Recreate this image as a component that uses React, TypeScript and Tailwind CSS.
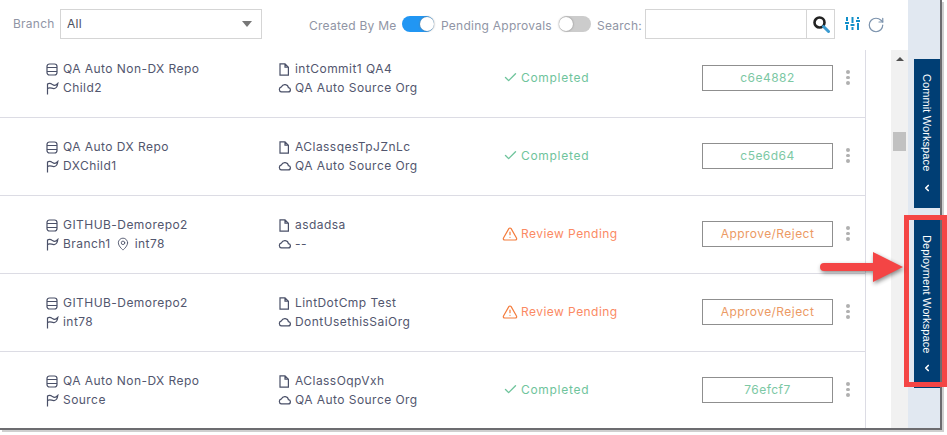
import { Check, ChevronLeft, MapPin, RotateCw, TriangleAlert } from 'lucide-react';

const rows = [
  { repo: 'QA Auto Non-DX Repo', branch: 'Child2', commit: 'intCommit1 QA4', org: 'QA Auto Source Org', done: true, action: 'c6e4882' },
  { repo: 'QA Auto DX Repo', branch: 'DXChild1', commit: 'AClassqesTpJZnLc', org: 'QA Auto Source Org', done: true, action: 'c5e6d64' },
  { repo: 'GITHUB-Demorepo2', branch: 'Branch1', pin: 'int78', commit: 'asdadsa', org: '--', done: false, action: 'Approve/Reject' },
  { repo: 'GITHUB-Demorepo2', branch: 'int78', commit: 'LintDotCmp Test', org: 'DontUsethisSaiOrg', done: false, action: 'Approve/Reject' },
  { repo: 'QA Auto Non-DX Repo', branch: 'Source', commit: 'AClassOqpVxh', org: 'QA Auto Source Org', done: true, action: '76efcf7' },
];

const iconStroke = { fill: 'none', stroke: '#4a5068', strokeWidth: 1.2 };

function FlagIcon() {
  return (
    <svg width="13" height="13" viewBox="0 0 13 13" {...iconStroke} className="shrink-0">
      <path d="M1.5 12.5V2C3.5.6 5 1.4 6.5 2.6 8 3.7 10 3.6 11.8 1.5 11.5 4 10.5 6.3 8 6.6 5.8 6.8 4 4.6 1.5 6.6" />
    </svg>
  );
}

function DbIcon() {
  return (
    <svg width="12" height="13" viewBox="0 0 12 13" {...iconStroke} className="shrink-0">
      <rect x="1" y="1" width="10" height="11" rx="2.5" />
      <path d="M1 4.5h10M1 8.5h10" />
    </svg>
  );
}

function FileIcon() {
  return (
    <svg width="12" height="13" viewBox="0 0 12 13" {...iconStroke} className="shrink-0">
      <path d="M2 .8h5l3.4 3.4v8H2zM7 .8v3.4h3.4" />
    </svg>
  );
}

function CloudIcon() {
  return (
    <svg width="13" height="10" viewBox="0 0 13 10" {...iconStroke} className="shrink-0">
      <path d="M3.4 8.9H10.2A2.1 2.1 0 0 0 10.4 4.7 3.6 3.6 0 0 0 3.5 3.8 2.6 2.6 0 0 0 3.4 8.9z" />
    </svg>
  );
}

function Toggle({ on }: { on: boolean }) {
  return (
    <span className={`flex h-4 w-8 items-center rounded-full ${on ? 'justify-end bg-[#2196f3]' : 'justify-start bg-[#cccccc]'}`}>
      <span className="size-[14px] rounded-full bg-white shadow-[0_0_2px_#777]" />
    </span>
  );
}

function IconLine({ icon, children }: { icon: React.ReactNode; children: React.ReactNode }) {
  return (
    <div className="flex h-[19px] items-center">
      <span className="-ml-px flex w-[17px] shrink-0 items-center">{icon}</span>
      {children}
    </div>
  );
}

function Row({ row }: { row: (typeof rows)[number] }) {
  return (
    <div className="flex h-[78px] shrink-0 items-center border-b border-[#dcdce4] pl-[47px] text-[#52566e]">
      <div className="w-[232px]">
        <IconLine icon={<DbIcon />}>{row.repo}</IconLine>
        <IconLine icon={<FlagIcon />}>
          {row.branch}
          {row.pin && (
            <>
              <MapPin size={14} color="#4a5068" strokeWidth={1.5} className="mx-[5px]" />
              {row.pin}
            </>
          )}
        </IconLine>
      </div>
      <div className="w-[224px]">
        <IconLine icon={<FileIcon />}>{row.commit}</IconLine>
        <IconLine icon={<CloudIcon />}>{row.org}</IconLine>
      </div>
      <div className={`mb-[2px] flex w-[199px] items-center gap-[3px] ${row.done ? 'text-[#6fc49c]' : 'text-[#fb8a64]'}`}>
        {row.done ? <Check size={15} strokeWidth={2.2} /> : <TriangleAlert size={16} strokeWidth={1.8} color="#f47c3c" className="-ml-px" />}
        <span className={row.done ? 'tracking-[0.7px]' : ''}>{row.done ? 'Completed' : 'Review Pending'}</span>
      </div>
      <button className={`mb-[2px] h-[26px] w-[131px] border border-[#8f8f8f] text-center ${row.done ? 'text-[#7cc8a4]' : 'text-[#ec9a64]'}`}>
        {row.action}
      </button>
      <div className="mb-[2px] ml-[13px] flex flex-col gap-[2px]">
        <span className="size-[3.5px] rounded-full bg-[#b0b0b0]" />
        <span className="size-[3.5px] rounded-full bg-[#b0b0b0]" />
        <span className="size-[3.5px] rounded-full bg-[#b0b0b0]" />
      </div>
    </div>
  );
}

function Tab({ label, height }: { label: string; height: string }) {
  return (
    <div className={`flex w-[26px] shrink-0 flex-col items-center justify-between bg-[#003e74] pb-[15px] pt-[15px] text-white ${height}`}>
      <span className="whitespace-nowrap text-[11px] tracking-[0.1px] [font-family:'Liberation_Sans',sans-serif] [writing-mode:vertical-rl]">{label}</span>
      <ChevronLeft size={10} strokeWidth={4} />
    </div>
  );
}

export default function App() {
  return (
    <div className="relative h-[435px] w-[947px] overflow-hidden bg-white text-[12px] tracking-[0.45px] [font-family:Inter,sans-serif]">
      <div className="flex h-[430px] w-[942px] border-b-2 border-[#6c6c70] shadow-[2px_2px_0_#cfcfcf]">
        <main className="flex w-[908px] flex-col">
          <header className="flex h-[50px] shrink-0 items-start pl-[13px] pt-[9px] tracking-[0.25px] text-[#9095a5]">
            <span className="mt-[6px] w-[47px]">Branch</span>
            <div className="flex h-[30px] w-[202px] items-center justify-between border border-[#d5d5d5] pl-[6px] pr-[9px] text-[#4a4f60]">
              All
              <span className="h-0 w-0 border-x-[5px] border-t-[6px] border-x-transparent border-t-[#777]" />
            </div>
            <span className="ml-[47px] mt-[8px] w-[93px]">Created By Me</span>
            <span className="mt-[7px]"><Toggle on /></span>
            <span className="ml-[7px] mt-[8px] w-[118px]">Pending Approvals</span>
            <span className="mt-[7px]"><Toggle on={false} /></span>
            <span className="ml-[6px] mt-[8px] w-[48px]">Search:</span>
            <div className="flex h-[30px] w-[190px] justify-end border border-[#d5d5d5]">
              <div className="flex w-[28px] items-center justify-center border-l border-[#d5d5d5]">
                <svg width="18" height="18" viewBox="0 0 18 18" fill="none">
                  <circle cx="7.5" cy="7.5" r="5" stroke="#222" strokeWidth="2.6" />
                  <path d="M11.5 11.5l5 5" stroke="#3b9bd1" strokeWidth="3" strokeLinecap="round" />
                </svg>
              </div>
            </div>
            <svg width="15" height="13" viewBox="0 0 15 13" className="ml-[10px] mt-[8px]" fill="#118fc9">
              <rect x="1" y="0" width="2" height="4" />
              <rect x="0" y="5" width="4" height="2" />
              <rect x="1" y="8" width="2" height="5" />
              <rect x="6.5" y="0" width="2" height="6" />
              <rect x="5.5" y="7" width="4" height="2" />
              <rect x="6.5" y="10" width="2" height="3" />
              <rect x="12" y="0" width="2" height="2" />
              <rect x="11" y="3" width="4" height="2" />
              <rect x="12" y="6" width="2" height="7" />
            </svg>
            <RotateCw size={18} color="#7c93ad" strokeWidth={1.6} className="ml-[7px] mt-[7px]" />
          </header>
          <div className="flex min-h-0 flex-1">
            <div className="flex w-[866px] flex-col overflow-hidden border-r border-[#dcdce4]">
              <div className="-mt-[10px] flex flex-col">
                {rows.map(r => <Row key={r.action + r.commit} row={r} />)}
              </div>
            </div>
            <div className="ml-[25px] flex w-[17px] flex-col items-center bg-[#f1f1f1] pt-[7px]">
              <span className="h-0 w-0 border-x-[4px] border-b-[4px] border-x-transparent border-b-[#505050]" />
              <span className="mt-[71px] h-[19px] w-[13px] bg-[#c1c1c1]" />
            </div>
          </div>
        </main>
        <aside className="flex w-[34px] flex-col gap-[12px] overflow-hidden border-r-2 border-[#6c6c70] bg-[#e1e8f1] pl-[6px] pt-[59px]">
          <Tab label="Commit Workspace" height="h-[149px]" />
          <Tab label="Deployment Workspace" height="h-[168px]" />
        </aside>
      </div>

      {/* annotation drawn over the screenshot */}
      <div className="absolute left-[904px] top-[215px] h-[172px] w-[43px] border-[5px] border-[#f44545]" />
      <svg width="90" height="36" viewBox="0 0 90 36" className="absolute left-[817px] top-[250px] drop-shadow-[1px_2px_2px_rgba(0,0,0,0.45)]">
        <path d="M7 13H56V2L86 17 56 32V21H7a4 4 0 0 1 0-8z" fill="#f44545" />
      </svg>
    </div>
  );
}
